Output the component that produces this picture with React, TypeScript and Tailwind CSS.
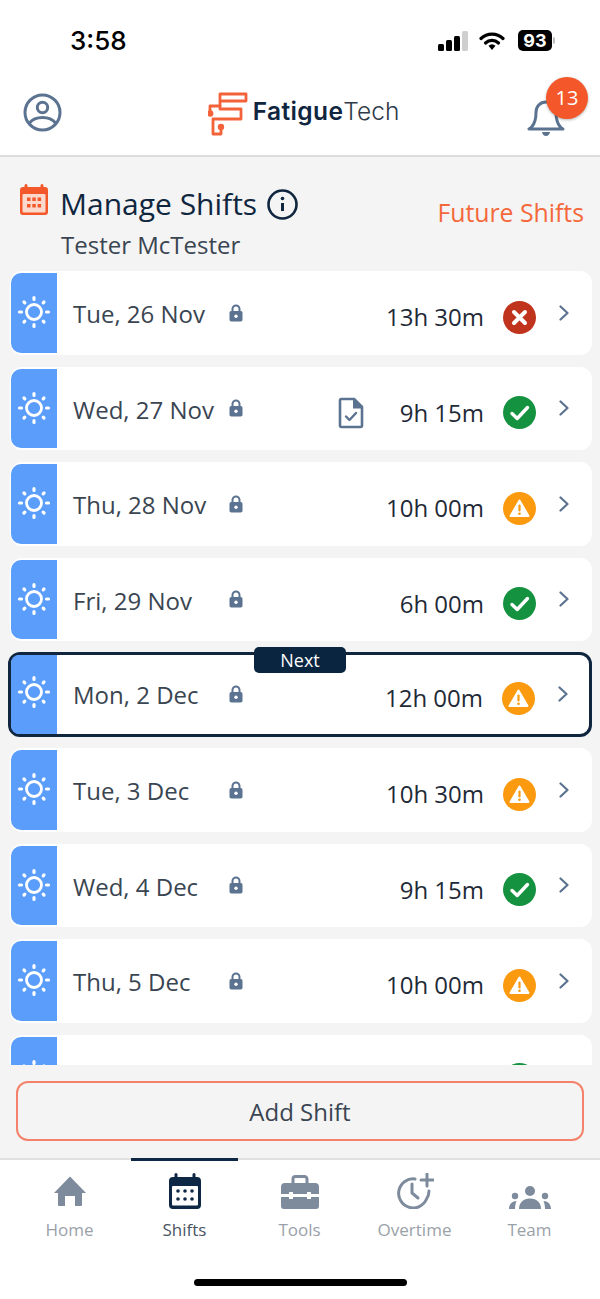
const font = { fontFamily: '"Open Sans", "Noto Sans", sans-serif' };

type Status = "ok" | "warn" | "bad";

type Shift = {
  date: string;
  duration: string;
  status: Status;
  doc?: boolean;
  next?: boolean;
};

const shifts: Shift[] = [
  { date: "Tue, 26 Nov", duration: "13h 30m", status: "bad" },
  { date: "Wed, 27 Nov", duration: "9h 15m", status: "ok", doc: true },
  { date: "Thu, 28 Nov", duration: "10h 00m", status: "warn" },
  { date: "Fri, 29 Nov", duration: "6h 00m", status: "ok" },
  { date: "Mon, 2 Dec", duration: "12h 00m", status: "warn", next: true },
  { date: "Tue, 3 Dec", duration: "10h 30m", status: "warn" },
  { date: "Wed, 4 Dec", duration: "9h 15m", status: "ok" },
  { date: "Thu, 5 Dec", duration: "10h 00m", status: "warn" },
];

function Sun() {
  return (
    <svg width="36" height="36" viewBox="0 0 36 36" fill="none" stroke="white" strokeLinecap="round">
      <circle cx="18" cy="18" r="7.5" strokeWidth="2.8" />
      <path strokeWidth="3.2" d="M18 3.500v2M18 30.500v2M3.500 18h2M30.500 18h2M8 8l.8.8M27.200 27.200l.8.8M8 28l.8-.8M27.200 8.800l.8-.8" />
    </svg>
  );
}

function Lock() {
  return (
    <svg width="14" height="18" viewBox="0 0 14 18" className="shrink-0">
      <path fill="none" stroke="#5b7390" strokeWidth="2" d="M3.500 8V5a3.500 3.500 0 0 1 7 0v3" />
      <rect x="0.500" y="7" width="13" height="10.500" rx="1.800" fill="#5b7390" />
      <circle cx="7" cy="12.200" r="1.700" fill="white" />
    </svg>
  );
}

function DocCheck() {
  return (
    <svg width="26" height="32" viewBox="0 0 26 32" fill="none" className="shrink-0 mr-[36px]">
      <path stroke="#5b7390" strokeWidth="2.600" strokeLinejoin="round" d="M2 3.500a1.500 1.500 0 0 1 1.500-1.500h12.500l8 8v18.500a1.500 1.500 0 0 1-1.500 1.500h-19a1.500 1.500 0 0 1-1.500-1.500z" />
      <path fill="#5b7390" d="M15 1.500h2l8 8v2h-10z" />
      <path stroke="#5b7390" strokeWidth="2.400" strokeLinecap="round" strokeLinejoin="round" d="M8 19.500l3.500 3.500 6.500-7" />
    </svg>
  );
}

function StatusIcon({ status }: { status: Status }) {
  if (status === "bad") {
    return (
      <svg width="33" height="33" viewBox="0 0 33 33" className="shrink-0">
        <circle cx="16.500" cy="16.500" r="16.500" fill="#c0341d" />
        <path stroke="white" strokeWidth="4" strokeLinecap="round" d="M11 11l11 11M22 11L11 22" />
      </svg>
    );
  }
  if (status === "ok") {
    return (
      <svg width="33" height="33" viewBox="0 0 33 33" fill="none" className="shrink-0">
        <circle cx="16.500" cy="16.500" r="16.500" fill="#15923f" />
        <path stroke="white" strokeWidth="3.400" strokeLinecap="round" strokeLinejoin="round" d="M9 17.500l5.200 5L24.500 11.500" />
      </svg>
    );
  }
  return (
    <svg width="33" height="33" viewBox="0 0 33 33" className="shrink-0">
      <circle cx="16.500" cy="16.500" r="16.500" fill="#fb9a0e" />
      <path fill="white" stroke="white" strokeWidth="2" strokeLinejoin="round" d="M16.500 8.500L25.500 24h-18z" />
      <path stroke="#fb9a0e" strokeWidth="2.200" strokeLinecap="round" d="M16.500 13.500v5" />
      <circle cx="16.500" cy="21.700" r="1.300" fill="#fb9a0e" />
    </svg>
  );
}

function Chevron() {
  return (
    <svg width="10" height="16" viewBox="0 0 10 16" fill="none" className="shrink-0">
      <path stroke="#5b7390" strokeWidth="2.200" strokeLinecap="round" strokeLinejoin="round" d="M1.500 1.500L8.500 8l-7 6.500" />
    </svg>
  );
}

function ShiftRow({ shift }: { shift: Shift }) {
  return (
    <div
      className={
        shift.next
          ? "relative flex h-[85px] mb-[11px] -mt-[1px] -ml-[2px] rounded-[12px] border-[3px] border-[#10263f] bg-white"
          : "relative flex h-[83.5px] mb-[12px] py-[2px] pl-[1px] rounded-[12px] bg-white"
      }
    >
      <div className={shift.next ? "flex w-[46px] items-center justify-center rounded-l-[8px] bg-[#5b9dfb] pb-[5px]" : "flex w-[46px] items-center justify-center rounded-l-[10px] bg-[#5b9dfb] pb-[1px]"}>
        <Sun />
      </div>
      <div className={shift.next ? "flex flex-1 items-center pl-[16px] pr-[21px] pb-[2px]" : "flex flex-1 items-center pl-[16px] pr-[23px]"}>
        <div className="w-[156px] mt-[3px] text-[24px] leading-none text-[#3a4552]">{shift.date}</div>
        <Lock />
        <div className="ml-auto mt-[9px] flex items-center">
          {shift.doc && <DocCheck />}
          <div className="text-[24px] leading-none text-[#1f2a38]">{shift.duration}</div>
        </div>
        <div className="ml-[19px] mr-[23px] mt-[9px]">
          <StatusIcon status={shift.status} />
        </div>
        <Chevron />
      </div>
      {shift.next && (
        <div className="absolute left-[243px] -top-[8px] flex h-[26px] w-[92px] items-center justify-center rounded-[5px] bg-[#0a2540] text-[18px] text-white">
          Next
        </div>
      )}
    </div>
  );
}

function StatusBar() {
  return (
    <div className="flex h-[76px] items-start justify-between pl-[70px] pr-[45px] pt-[23px]">
      <div className="text-[26px] leading-[36px] font-medium text-black" style={{ fontFamily: '"Inter", sans-serif' }}>3:58</div>
      <div className="flex items-center gap-[11px] pt-[7px]">
        <svg width="30" height="20" viewBox="0 0 30 20">
          <rect x="0" y="13" width="6" height="7" rx="1.500" fill="black" />
          <rect x="8" y="9" width="6" height="11" rx="1.500" fill="black" />
          <rect x="16" y="5" width="6" height="15" rx="1.500" fill="black" />
          <rect x="24" y="0" width="6" height="20" rx="1.500" fill="#cfcfcf" />
        </svg>
        <svg width="26" height="20" viewBox="0 0 26 20" fill="none" stroke="black" strokeWidth="3.200" strokeLinecap="round">
          <path d="M2 7.500a16 16 0 0 1 22 0" />
          <path d="M6.500 12a9.500 9.500 0 0 1 13 0" />
          <path fill="black" stroke="none" d="M9.500 14.800a5.200 5.200 0 0 1 7 0L13 19z" />
        </svg>
        <div className="ml-[2px] flex items-center">
          <div className="flex h-[21px] w-[34px] items-center justify-center rounded-[5px] bg-black text-[18px] font-bold leading-none text-white" style={{ fontFamily: '"Inter", sans-serif' }}>93</div>
          <div className="ml-[1px] h-[7px] w-[2px] rounded-r-[2px] bg-[#bdbdbd]" />
        </div>
      </div>
    </div>
  );
}

function Logo() {
  return (
    <div className="flex items-start">
      <svg width="46" height="46" viewBox="0 0 46 46" fill="none" stroke="#f4623a" strokeWidth="2.800" strokeLinejoin="round" strokeLinecap="round">
        <path d="M12 17V2h26v7H12v8h21v10H5v15h8v-7" />
        <path d="M2 21v-7h10" />
        <circle cx="2.200" cy="21.500" r="1.800" fill="#f4623a" />
        <circle cx="13" cy="35" r="1.800" fill="#f4623a" />
      </svg>
      <div className="mt-[7px] -ml-[1px] text-[24.500px] leading-[24px] text-[#10263f]" style={{ fontFamily: '"Inter", sans-serif' }}>
        <span className="font-semibold tracking-[0.4px]">Fatigue</span>
        <span className="font-light text-[#2f3a48]">Tech</span>
      </div>
    </div>
  );
}

function TopBar() {
  return (
    <div className="relative flex h-[81px] items-start justify-between border-b-2 border-[#dcdcdc] bg-white pl-[23px] pr-[35px] pt-[17px]">
      <svg width="39" height="39" viewBox="0 0 39 39" fill="none" stroke="#5b7390" strokeWidth="3">
        <circle cx="19.500" cy="19.500" r="17.500" />
        <circle cx="19.500" cy="14.500" r="5.200" />
        <path d="M6.500 30c3-4 7.500-5.500 13-5.500s10 1.500 13 5.500" />
      </svg>
      <div className="-mt-[1px] ml-[18px]">
        <Logo />
      </div>
      <div className="relative mt-[7px]">
        <svg width="38" height="37" viewBox="0 0 38 37" fill="none" stroke="#5b7390" strokeWidth="3" strokeLinejoin="round" strokeLinecap="round">
          <path d="M19 2c-6 0-10 4.500-10 10.500 0 7-1.500 11-4 14-.8 1-1.800 1.800-3 2.500h34c-1.200-.7-2.200-1.500-3-2.500-2.500-3-4-7-4-14C29 6.500 25 2 19 2z" />
          <path fill="#5b7390" stroke="none" d="M15 32h8c-.5 2.500-2 4-4 4s-3.500-1.500-4-4z" />
        </svg>
        <div className="absolute -top-[23px] left-[19px] flex h-[42px] w-[42px] items-center justify-center rounded-full bg-[#f4582a] text-[20px] text-white shadow-[0_1px_3px_rgba(0,0,0,0.3)]" style={font}>
          13
        </div>
      </div>
    </div>
  );
}

function PageTitle() {
  return (
    <div className="flex h-[114px] items-start justify-between pl-[20px] pr-[16px]">
      <div className="flex items-start">
        <svg width="28" height="31" viewBox="0 0 28 31" className="mt-[27px] shrink-0">
          <path fill="#f4582a" d="M6 0a1.500 1.500 0 0 1 1.500 1.500V3h13V1.500a1.500 1.500 0 0 1 3 0V3H25a3 3 0 0 1 3 3v22a3 3 0 0 1-3 3H3a3 3 0 0 1-3-3V6a3 3 0 0 1 3-3h1.500V1.500A1.500 1.500 0 0 1 6 0z" />
          <rect x="2.500" y="10" width="23" height="18.500" rx="1" fill="#fbd9cd" />
          <g fill="#f4582a">
            <rect x="7" y="13.500" width="3.500" height="3.500" />
            <rect x="12.300" y="13.500" width="3.500" height="3.500" />
            <rect x="17.600" y="13.500" width="3.500" height="3.500" />
            <rect x="7" y="20" width="3.500" height="3.500" />
            <rect x="12.300" y="20" width="3.500" height="3.500" />
            <rect x="17.600" y="20" width="3.500" height="3.500" />
          </g>
        </svg>
        <div className="ml-[13px] pt-[27px]">
          <div className="flex items-center">
            <h1 className="-ml-[1px] text-[30px] leading-[40px] font-medium text-[#10263f]">Manage Shifts</h1>
            <svg width="31" height="31" viewBox="0 0 31 31" fill="none" stroke="#10263f" className="ml-[10px]">
              <circle cx="15.500" cy="15.500" r="14" strokeWidth="2.600" />
              <path strokeWidth="3" d="M15.500 14v8" />
              <circle cx="15.500" cy="9.500" r="1.800" fill="#10263f" stroke="none" />
            </svg>
          </div>
          <div className="mt-[5px] text-[24px] leading-[32px] text-[#3a4552]">Tester McTester</div>
        </div>
      </div>
      <div className="pt-[39px] text-[24.800px] leading-[32px] font-medium text-[#f4683a]">Future Shifts</div>
    </div>
  );
}

function HomeIcon() {
  return (
    <svg width="32" height="30" viewBox="0 0 32 30" className="mb-[3px]">
      <path fill="#7d8b9c" d="M16 .5L32 17h-4v12a1 1 0 0 1-1 1h-6V20h-10v10H5a1 1 0 0 1-1-1V17H0z" />
    </svg>
  );
}

function ShiftsIcon() {
  return (
    <svg width="32" height="36" viewBox="0 0 32 36">
      <path fill="#0d2745" d="M7 0a1.500 1.500 0 0 1 1.500 1.500V4h15V1.500a1.500 1.500 0 0 1 3 0V4H28a4 4 0 0 1 4 4v24a4 4 0 0 1-4 4H4a4 4 0 0 1-4-4V8a4 4 0 0 1 4-4h1.500V1.500A1.500 1.500 0 0 1 7 0z" />
      <rect x="3" y="13" width="26" height="19.500" rx="1" fill="white" />
      <g fill="#0d2745">
        <circle cx="9" cy="18" r="1.800" /><circle cx="16" cy="18" r="1.800" /><circle cx="23" cy="18" r="1.800" />
        <circle cx="9" cy="26" r="1.800" /><circle cx="16" cy="26" r="1.800" /><circle cx="23" cy="26" r="1.800" />
      </g>
    </svg>
  );
}

function ToolsIcon() {
  return (
    <svg width="38" height="34" viewBox="0 0 38 34">
      <path fill="none" stroke="#7d8b9c" strokeWidth="3" d="M12 10V4a2.500 2.500 0 0 1 2.500-2.500h9A2.500 2.500 0 0 1 26 4v6" />
      <path fill="#7d8b9c" d="M4 8h30a4 4 0 0 1 4 4v7h-8v-2h-4v2H12v-2H8v2H0v-7a4 4 0 0 1 4-4z" />
      <path fill="#7d8b9c" d="M0 22h8v2h4v-2h14v2h4v-2h8v9a3 3 0 0 1-3 3H3a3 3 0 0 1-3-3z" />
    </svg>
  );
}

function OvertimeIcon() {
  return (
    <svg width="38" height="36" viewBox="0 0 38 36" fill="none" stroke="#7d8b9c" strokeWidth="3" strokeLinecap="round" strokeLinejoin="round">
      <path d="M19 6a14.500 14.500 0 1 0 11.500 20 14.500 14.500 0 0 0 2.500-8" />
      <path d="M16 11v9l6 5" />
      <path d="M31 1v12M25 7h12" />
    </svg>
  );
}

function TeamIcon() {
  return (
    <svg width="42" height="23" viewBox="0 0 42 23" fill="#7d8b9c">
      <circle cx="21" cy="5" r="5" />
      <circle cx="6" cy="10" r="3.200" />
      <circle cx="36" cy="10" r="3.200" />
      <path d="M10 23c0-6 4-10.500 11-10.500S32 17 32 23z" />
      <path d="M0 23c0-4 2.500-8 7.500-8-1 2-1.500 5-1.500 8zM42 23c0-4-2.500-8-7.500-8 1 2 1.500 5 1.500 8z" />
    </svg>
  );
}

const tabs = [
  { label: "Home", icon: <HomeIcon /> },
  { label: "Shifts", icon: <ShiftsIcon />, active: true },
  { label: "Tools", icon: <ToolsIcon /> },
  { label: "Overtime", icon: <OvertimeIcon /> },
  { label: "Team", icon: <TeamIcon /> },
];

function TabBar() {
  return (
    <div className="relative flex-1 border-t-2 border-[#e0e0e0] bg-white">
      <div className="grid grid-cols-5 pl-[12px] pr-[13px]">
        {tabs.map((t) => (
          <div key={t.label} className="relative flex flex-col items-center">
            {t.active && <div className="absolute -top-[2px] h-[3px] w-[107px] bg-[#0d2745]" />}
            <div className="flex h-[42px] items-end mt-[7px]">{t.icon}</div>
            <div className={t.active ? "mt-[10px] text-[17px] leading-[22px] text-[#4a5563]" : "mt-[10px] text-[17px] leading-[22px] text-[#9aa1a9]"}>{t.label}</div>
          </div>
        ))}
      </div>
      <div className="absolute bottom-[13px] left-[194px] h-[7px] w-[213px] rounded-full bg-black" />
    </div>
  );
}

export default function App() {
  return (
    <div className="flex h-[1299px] w-[600px] flex-col overflow-hidden bg-[#f4f4f4]" style={font}>
      <div className="bg-white">
        <StatusBar />
        <TopBar />
      </div>
      <PageTitle />
      <div className="h-[794px] overflow-hidden pl-[10px] pr-[8px]">
        {shifts.map((s) => (
          <ShiftRow key={s.date} shift={s} />
        ))}
        <div className="relative flex h-[83.5px] py-[2px] pl-[1px] rounded-[12px] bg-white">
          <div className="flex w-[46px] items-center justify-center rounded-l-[10px] bg-[#5b9dfb] pb-[1px]">
            <Sun />
          </div>
          <div className="ml-auto mr-[56px] mt-[26px]">
            <StatusIcon status="ok" />
          </div>
        </div>
      </div>
      <div className="px-[16px] pt-[16px] pb-[17px]">
        <button className="flex h-[60px] w-full items-center justify-center rounded-[12px] border-2 border-[#f4826a] pt-[1px] text-[24px] text-[#3a4552]">
          Add Shift
        </button>
      </div>
      <TabBar />
    </div>
  );
}
